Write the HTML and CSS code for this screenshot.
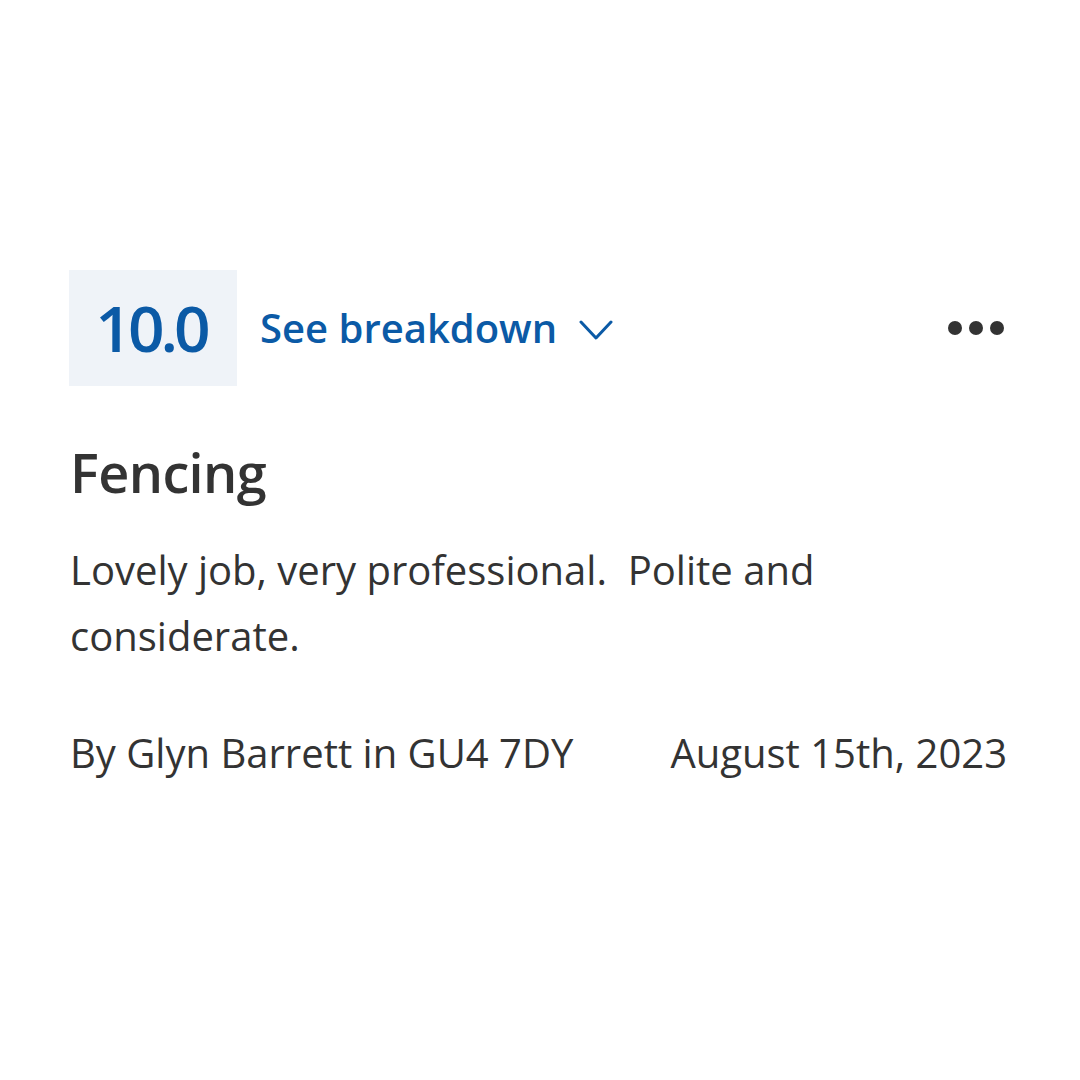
FILE: index.html
```html
<!DOCTYPE html>
<html lang="en">
<head>
<meta charset="utf-8">
<title>Review</title>
<link rel="stylesheet" href="styles.css">
</head>
<body>
<main class="review">
  <div class="top">
    <div class="score">10.0</div>
    <button class="breakdown">See breakdown
      <svg class="chev" viewBox="0 0 34 22" width="34" height="22" aria-hidden="true"><path d="M2 3 L17 19 L32 3" fill="none" stroke="#0b5aa6" stroke-width="3" stroke-linecap="round" stroke-linejoin="round"/></svg>
    </button>
    <div class="more" aria-label="More options"><span></span><span></span><span></span></div>
  </div>
  <h1 class="title">Fencing</h1>
  <p class="body">Lovely job, very professional.&nbsp; Polite and considerate.</p>
  <div class="meta">
    <span>By Glyn Barrett in GU4 7DY</span>
    <span>August 15th, 2023</span>
  </div>
</main>
</body>
</html>
```

FILE: styles.css
```css
html, body {
  margin: 0;
  padding: 0;
  background: #ffffff;
}
body {
  font-family: "Open Sans", "Noto Sans", sans-serif;
  color: #333333;
}
.review {
  width: 938px;
  padding: 270px 0 0 69px;
}
.top {
  display: flex;
  align-items: center;
  height: 116px;
}
.score {
  width: 168px;
  height: 116px;
  background: #eff3f8;
  color: #0b5aa6;
  font-weight: 600;
  font-size: 64px;
  letter-spacing: -4px;
  display: flex;
  align-items: center;
  justify-content: center;
  line-height: 1;
  padding-right: 4px;
  box-sizing: border-box;
}
.breakdown {
  margin-left: 23px;
  border: 0;
  background: none;
  padding: 0;
  font-family: inherit;
  font-weight: 600;
  font-size: 40px;
  color: #0b5aa6;
  display: flex;
  align-items: center;
  gap: 22px;
  line-height: 1;
}
.chev { margin-top: 4px; }
.more {
  margin-left: auto;
  margin-right: 3px;
  display: flex;
  gap: 7px;
}
.more span {
  width: 14px;
  height: 14px;
  border-radius: 50%;
  background: #333333;
}
.title {
  margin: 54px 0 0 1px;
  font-size: 54px;
  font-weight: 600;
  line-height: 1.2;
  letter-spacing: -0.6px;
}
.body {
  margin: 32px 0 0 1px;
  width: 800px;
  font-size: 40px;
  line-height: 66px;
}
.meta {
  margin: 56px 0 0 1px;
  display: flex;
  justify-content: space-between;
  font-size: 40px;
  line-height: 1.4;
}
```
